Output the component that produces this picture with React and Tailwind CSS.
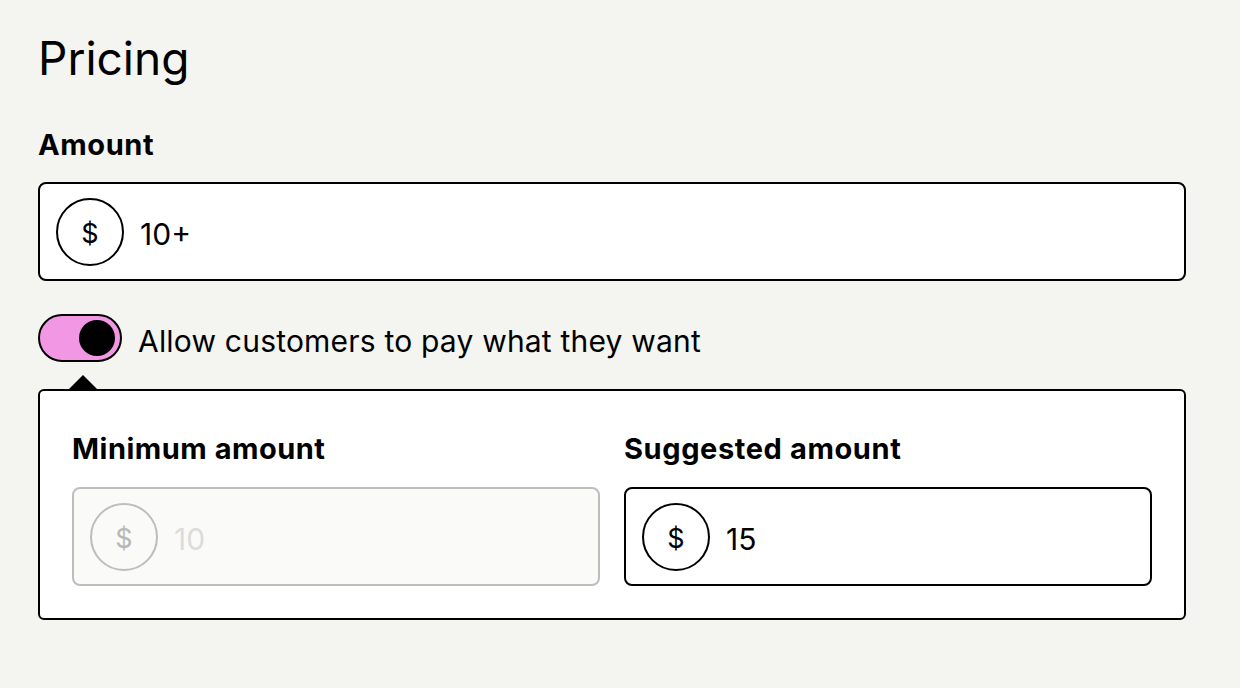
import React, { useState } from 'react'

const font = { fontFamily: 'Inter, "Noto Sans", sans-serif' }

const DollarInput = ({ value, disabled }) => (
  <div
    className={
      'h-[99px] rounded-lg border-2 flex items-center px-4 gap-4 ' +
      (disabled ? 'border-[#bdbdbb] bg-[#fafaf8]' : 'border-black bg-white')
    }
  >
    <div
      className={
        'w-[68px] h-[68px] shrink-0 rounded-full border-2 flex items-center justify-center text-[27px] leading-none pt-[3px] ' +
        (disabled ? 'border-[#bdbdbb] text-[#b8b8b6]' : 'border-black text-black')
      }
    >
      $
    </div>
    <span className={'text-[30px] leading-[36px] pt-[4px] ' + (disabled ? 'text-[#dcdcda]' : 'text-black')}>{value}</span>
  </div>
)

export default function App() {
  const [on, setOn] = useState(true)

  return (
    <div className="min-h-screen bg-[#f4f4f0] text-black" style={font}>
      <div className="w-[1148px] ml-[38px] pt-[26px]">
        <h1 className="text-[46px] leading-[64px] font-normal">Pricing</h1>

        <h2 className="mt-[37px] text-[29px] font-bold leading-[36px] tracking-[0.6px]">Amount</h2>
        <div className="mt-[19px]">
          <DollarInput value="10+" />
        </div>

        <div className="mt-[33px] flex items-center gap-4">
          <button
            onClick={() => setOn(!on)}
            className="w-[84px] h-[48px] rounded-full border-2 border-black bg-[#f197e3] flex items-center px-[5px] justify-end"
          >
            <span className="w-[36px] h-[36px] rounded-full bg-black" />
          </button>
          <span className="text-[30px] leading-[36px] tracking-[0.2px] pt-[5px]">Allow customers to pay what they want</span>
        </div>

        <div className="relative mt-[27px] bg-white border-2 border-black rounded-md px-[32px] pt-[40px] pb-[32px]">
          <div className="absolute -top-[16px] left-[29px] w-0 h-0 border-l-[14px] border-r-[14px] border-b-[14px] border-l-transparent border-r-transparent border-b-black" />
          <div className="grid grid-cols-2 gap-6">
            <div>
              <div className="text-[29px] font-bold leading-[36px] tracking-[0.5px]">Minimum amount</div>
              <div className="mt-[20px]">
                <DollarInput value="10" disabled />
              </div>
            </div>
            <div>
              <div className="text-[29px] font-bold leading-[36px] tracking-[0.6px]">Suggested amount</div>
              <div className="mt-[20px]">
                <DollarInput value="15" />
              </div>
            </div>
          </div>
        </div>
      </div>
    </div>
  )
}
